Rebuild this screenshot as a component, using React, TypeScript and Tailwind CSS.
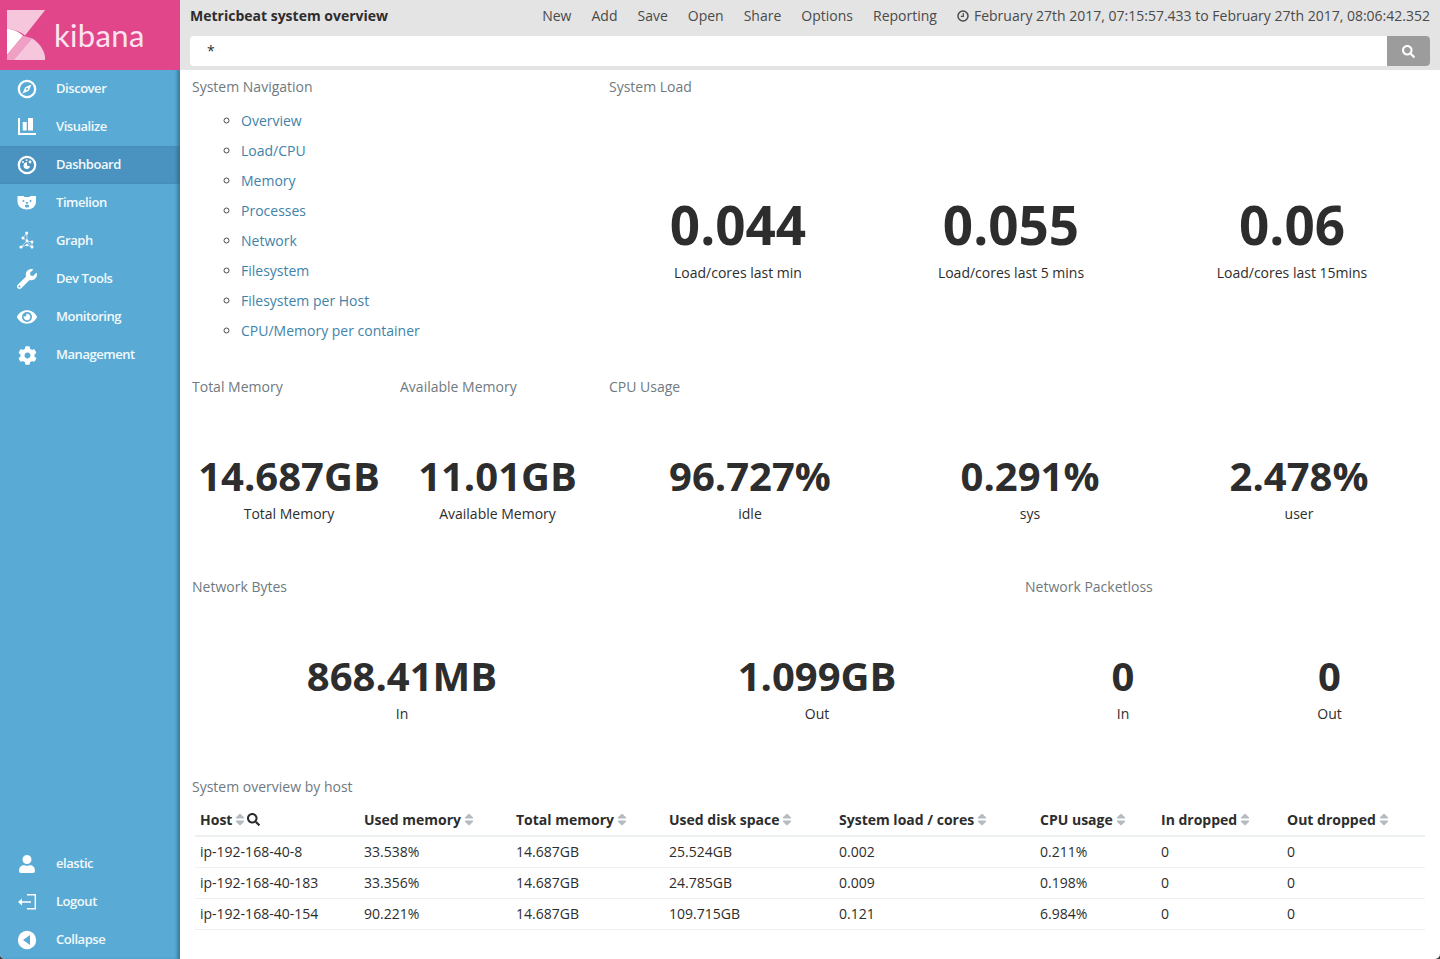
import React from "react";
import { FaWrench, FaEye, FaCog, FaUser, FaSearch, FaSort } from "react-icons/fa";

const Discover = () => (
  <svg viewBox="0 0 20 20" className="w-[20px] h-[20px]" fill="none">
    <circle cx="10" cy="10" r="8.2" stroke="white" strokeWidth="2.2" />
    <path d="M14.5 5.5 L11.8 11.8 L5.5 14.5 L8.2 8.2 Z M10 9 a1 1 0 1 0 .01 0Z" fill="white" fillRule="evenodd" />
  </svg>
);
const Visualize = () => (
  <svg viewBox="0 0 20 20" className="w-[20px] h-[20px]" fill="white">
    <path d="M1 1h2v15h16v2H1z" />
    <rect x="5.7" y="5" width="4" height="8.500" />
    <rect x="11" y="1" width="5" height="12.500" />
  </svg>
);
const Dashboard = () => (
  <svg viewBox="0 0 20 20" className="w-[20px] h-[20px]" fill="none">
    <circle cx="10" cy="10" r="8.2" stroke="white" strokeWidth="2.2" />
    <path d="M10 7.2a3.4 3.4 0 1 0 3.2 4.4 L10 10.6Z" fill="white" />
    <circle cx="13" cy="7" r="1.4" fill="white" />
    <circle cx="6" cy="7" r="1" fill="white" />
    <circle cx="9.6" cy="5.2" r="0.9" fill="white" />
  </svg>
);
const Timelion = () => (
  <svg viewBox="0 0 20 20" className="w-[20px] h-[20px]">
    <path d="M1.500 3h5l1 1h5l1-1h5c.3 0 .5.2.5.5v5c0 5-4 8-9 8s-9.500-3-9.500-8v-5c0-.3.2-.5.5-.5z" fill="white" />
    <circle cx="6.500" cy="8" r="1" fill="#59abd6" />
    <circle cx="13.500" cy="8" r="1" fill="#59abd6" />
    <ellipse cx="10" cy="13" rx="2.200" ry="1.500" fill="#59abd6" />
    <path d="M8.500 9h3l-1 1.800h-1Z" fill="#59abd6" />
  </svg>
);
const Graph = () => (
  <svg viewBox="0 0 20 20" className="w-[20px] h-[20px]" fill="white">
    <g stroke="white" strokeWidth="0.8" strokeOpacity="0.75" fill="none">
      <path d="M9.700 2 L6 7 L10 10 L15 11 L15 16 L10 14 L4 16 L10 10 M9.700 2 L10 10 M10 10 L15 16" />
    </g>
    <circle cx="9.700" cy="2" r="1.500" />
    <circle cx="6" cy="7" r="1.500" />
    <circle cx="10" cy="10" r="1.400" />
    <circle cx="15" cy="11" r="1.400" />
    <circle cx="4" cy="16" r="1.600" />
    <circle cx="10" cy="14" r="1.300" />
    <circle cx="15" cy="16" r="1.500" />
  </svg>
);
const Logout = () => (
  <svg viewBox="0 0 20 20" className="w-[20px] h-[20px]" fill="white">
    <path d="M10 2h9v15.500h-9v-1.400h7.600V3.400H10z" />
    <path d="M1 10l4-3.500v2.700h9v1.600H5V13.500z" />
  </svg>
);
const Collapse = () => (
  <svg viewBox="0 0 20 20" className="w-[20px] h-[20px]">
    <circle cx="10" cy="10" r="9.200" fill="white" />
    <path d="M6 10l7-5v10z" fill="#59abd6" />
  </svg>
);
const Clock = () => (
  <svg viewBox="0 0 12 12" className="w-[12px] h-[12px] mr-[5px]" fill="none" stroke="#4a4a4a">
    <circle cx="6" cy="6" r="5" strokeWidth="1.500" />
    <path d="M6.300 3v3.300H3.800" strokeWidth="1.200" />
  </svg>
);
const Logo = () => (
  <svg viewBox="0 0 38.300 50" className="w-[38.3px] h-[50px]">
    <path d="M0 0H38.300L18 25.500C13 21.500 7 19 0 19Z" fill="#f5c6dc" />
    <path d="M0 19C6 19 11.500 21.500 16 25.700L0 45Z" fill="#ffffff" />
    <path d="M16 25.700L25 28.300L6.600 50H0V45Z" fill="#f0a0c5" />
    <path d="M25 28.300C33 33.500 38.300 41.500 38.300 50H6.600Z" fill="#f5c6dc" />
  </svg>
);

const top = [
  ["Discover", <Discover />],
  ["Visualize", <Visualize />],
  ["Dashboard", <Dashboard />],
  ["Timelion", <Timelion />],
  ["Graph", <Graph />],
  ["Dev Tools", <FaWrench className="text-white w-[20px] h-[20px]" />],
  ["Monitoring", <FaEye className="text-white w-[20px] h-[20px]" />],
  ["Management", <FaCog className="text-white w-[19px] h-[19px]" />],
] as const;
const bottom = [
  ["elastic", <FaUser className="text-white w-[18px] h-[18px]" />],
  ["Logout", <Logout />],
  ["Collapse", <Collapse />],
] as const;

function NavItem({ label, icon, active }: { label: string; icon: React.ReactNode; active?: boolean }) {
  return (
    <div className={`h-[38px] flex items-center pl-[17px] ${active ? "bg-[#4a92bf] shadow-[inset_-4px_0_3px_-1px_rgba(40,90,125,0.55)]" : ""}`}>
      <span className="w-[20px] h-[20px] flex items-center justify-center">{icon}</span>
      <span className="ml-[19px] text-[13px] font-semibold text-[#f2f9fc] tracking-[-0.45px]">{label}</span>
    </div>
  );
}

function Sidebar() {
  return (
    <aside className="w-[180px] shrink-0 h-[959px] bg-[#59abd6] flex flex-col shadow-[inset_-4px_0_3px_-1px_rgba(40,90,125,0.55)]">
      <div className="h-[70px] bg-[#e1468b] flex items-center pl-[6.7px]">
        <Logo />
        <span className="ml-[9px] text-[31px] leading-none text-[#fce4ef] tracking-[0.35px] font-normal" style={{ fontFamily: "Lato, sans-serif" }}>kibana</span>
      </div>
      <nav className="flex flex-col">
        {top.map(([l, i]) => (
          <NavItem key={l} label={l} icon={i} active={l === "Dashboard"} />
        ))}
      </nav>
      <nav className="mt-auto flex flex-col">
        {bottom.map(([l, i]) => (
          <NavItem key={l} label={l} icon={i} />
        ))}
      </nav>
    </aside>
  );
}

function TopBar() {
  return (
    <div className="h-[70px] bg-[#e4e4e4] px-[10px] text-[14px] text-[#4a4a4a]">
      <div className="h-[36px] flex items-center justify-between pb-[5px]">
        <span className="font-bold text-[#2d2d2d]">Metricbeat system overview</span>
        <div className="flex items-center">
          {["New", "Add", "Save", "Open", "Share", "Options", "Reporting"].map((t) => (
            <span key={t} className="mr-[20px]">{t}</span>
          ))}
          <Clock />
          <span>February 27th 2017, 07:15:57.433 to February 27th 2017, 08:06:42.352</span>
        </div>
      </div>
      <div className="h-[30px] flex bg-white rounded-[4px] overflow-hidden">
        <div className="flex-1 pl-[17px] text-[#2d2d2d] leading-[29px]">*</div>
        <div className="w-[43px] bg-[#9c9c9c] flex items-center justify-center">
          <FaSearch className="text-white w-[13px] h-[13px]" />
        </div>
      </div>
    </div>
  );
}

function Title({ children, nudge }: { children: React.ReactNode; nudge?: boolean }) {
  return <h2 className={`text-[14px] leading-[20px] text-[#6f7a80] ${nudge ? "pl-[5px]" : "pl-[4px]"}`}>{children}</h2>;
}

function Metric({ value, label, w, size }: { value: string; label: string; w: string; size: "lg" | "md" }) {
  return (
    <div className={`${w} shrink-0 text-center flex flex-col items-center`}>
      <div className={size === "lg" ? "text-[53px] leading-[60px] font-bold text-[#2d2d2d]" : "text-[40px] leading-[46px] font-bold text-[#2d2d2d]"}>{value}</div>
      <div className={`text-[14px] leading-[20px] text-[#2d2d2d] ${size === "lg" ? "mt-[8px]" : "mt-[5px]"}`}>{label}</div>
    </div>
  );
}

const links = ["Overview", "Load/CPU", "Memory", "Processes", "Network", "Filesystem", "Filesystem per Host", "CPU/Memory per container"];

const cols = [
  ["Host", 164], ["Used memory", 152], ["Total memory", 153], ["Used disk space", 170],
  ["System load / cores", 201], ["CPU usage", 121], ["In dropped", 126], ["Out dropped", 143],
] as const;
const rows = [
  ["ip-192-168-40-8", "33.538%", "14.687GB", "25.524GB", "0.002", "0.211%", "0", "0"],
  ["ip-192-168-40-183", "33.356%", "14.687GB", "24.785GB", "0.009", "0.198%", "0", "0"],
  ["ip-192-168-40-154", "90.221%", "14.687GB", "109.715GB", "0.121", "6.984%", "0", "0"],
];

function HostTable() {
  return (
    <table className="table-fixed w-[1230px] border-collapse text-[14px] text-[#2d2d2d] ml-[7px] mt-[8px]">
      <colgroup>
        {cols.map(([n, w]) => (
          <col key={n} style={{ width: w }} />
        ))}
      </colgroup>
      <thead>
        <tr className="border-b-2 border-[#ecf0f1] h-[31px]">
          {cols.map(([n], i) => (
            <th key={n} className="text-left font-bold px-[5px] pb-[2px] whitespace-nowrap">
              <span className="inline-flex items-center">
                {n}
                <FaSort className="w-[10px] h-[15px] ml-[3px] text-[#b4bcc2]" />
                {i === 0 && <FaSearch className="w-[13px] h-[13px] ml-[2px] text-[#2d2d2d]" />}
              </span>
            </th>
          ))}
        </tr>
      </thead>
      <tbody>
        {rows.map((r) => (
          <tr key={r[0]} className="border-b border-[#ecf0f1] h-[31px]">
            {r.map((c, i) => (
              <td key={i} className="px-[5px]">{c}</td>
            ))}
          </tr>
        ))}
      </tbody>
    </table>
  );
}

export default function App() {
  return (
    <div className="w-[1440px] h-[959px] bg-[#3a3a3a]">
      <div className="flex w-[1440px] h-[959px] overflow-hidden rounded-b-[5px] bg-white" style={{ fontFamily: "'Open Sans', sans-serif" }}>
        <Sidebar />
        <main className="flex-1 min-w-0">
          <TopBar />
          <div className="w-[1248px] ml-[8px] grid grid-cols-12 grid-rows-[300px_200px_200px_auto] pt-[7px]">
            <section className="col-span-4">
              <Title>System Navigation</Title>
              <ul className="list-[circle] pl-[53px] mt-[9px] text-[14px] leading-[30px] text-[#3f83a8] marker:text-[#4a4a4a]">
                {links.map((l) => (
                  <li key={l}>{l}</li>
                ))}
              </ul>
            </section>
            <section className="col-span-8">
              <Title nudge>System Load</Title>
              <div className="flex mt-[98px]">
                <Metric size="lg" w="w-[268px]" value="0.044" label="Load/cores last min" />
                <Metric size="lg" w="w-[278px]" value="0.055" label="Load/cores last 5 mins" />
                <Metric size="lg" w="w-[284px]" value="0.06" label="Load/cores last 15mins" />
              </div>
            </section>

            <section className="col-span-2">
              <Title>Total Memory</Title>
              <div className="flex mt-[56px]">
                <Metric size="md" w="w-[202px]" value="14.687GB" label="Total Memory" />
              </div>
            </section>
            <section className="col-span-2">
              <Title>Available Memory</Title>
              <div className="flex mt-[56px]">
                <Metric size="md" w="w-[203px]" value="11.01GB" label="Available Memory" />
              </div>
            </section>
            <section className="col-span-8">
              <Title nudge>CPU Usage</Title>
              <div className="flex mt-[56px]">
                <Metric size="md" w="w-[292px]" value="96.727%" label="idle" />
                <Metric size="md" w="w-[268px]" value="0.291%" label="sys" />
                <Metric size="md" w="w-[270px]" value="2.478%" label="user" />
              </div>
            </section>

            <section className="col-span-8">
              <Title>Network Bytes</Title>
              <div className="flex mt-[56px]">
                <Metric size="md" w="w-[428px]" value="868.41MB" label="In" />
                <Metric size="md" w="w-[402px]" value="1.099GB" label="Out" />
              </div>
            </section>
            <section className="col-span-4">
              <Title nudge>Network Packetloss</Title>
              <div className="flex mt-[56px]">
                <Metric size="md" w="w-[206px]" value="0" label="In" />
                <Metric size="md" w="w-[207px]" value="0" label="Out" />
              </div>
            </section>

            <section className="col-span-12">
              <Title>System overview by host</Title>
              <HostTable />
            </section>
          </div>
        </main>
      </div>
    </div>
  );
}
